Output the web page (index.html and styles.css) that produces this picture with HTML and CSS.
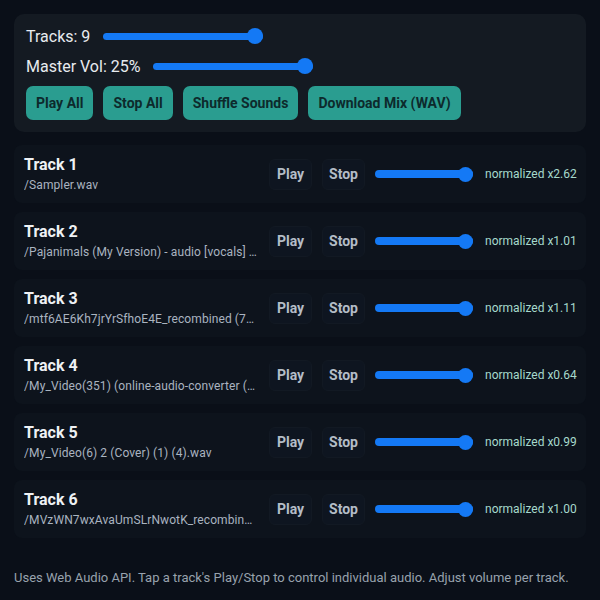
FILE: index.html
```html
<!DOCTYPE html>
<html lang="en">
<head>
  <meta charset="UTF-8">
  <title>Multi Track Player</title>
  <link rel="stylesheet" href="styles.css">
</head>
<body>
  <div class="panel">
    <div class="row">
      <label>Tracks: 9</label>
      <input type="range" class="slider" min="1" max="9" value="9">
    </div>
    <div class="row">
      <label>Master Vol: 25%</label>
      <input type="range" class="slider" min="0" max="25" value="25">
    </div>
    <div class="actions">
      <button class="action">Play All</button>
      <button class="action">Stop All</button>
      <button class="action">Shuffle Sounds</button>
      <button class="action">Download Mix (WAV)</button>
    </div>
  </div>

  <div class="tracks">
    <div class="track">
      <div class="info">
        <div class="title">Track 1</div>
        <div class="file">/Sampler.wav</div>
      </div>
      <button class="ctl">Play</button>
      <button class="ctl">Stop</button>
      <input type="range" class="vol" value="100">
      <span class="norm">normalized x2.62</span>
    </div>
    <div class="track">
      <div class="info">
        <div class="title">Track 2</div>
        <div class="file">/Pajanimals (My Version) - audio [vocals] (1).wav</div>
      </div>
      <button class="ctl">Play</button>
      <button class="ctl">Stop</button>
      <input type="range" class="vol" value="100">
      <span class="norm">normalized x1.01</span>
    </div>
    <div class="track">
      <div class="info">
        <div class="title">Track 3</div>
        <div class="file">/mtf6AE6Kh7jrYrSfhoE4E_recombined (7).wav</div>
      </div>
      <button class="ctl">Play</button>
      <button class="ctl">Stop</button>
      <input type="range" class="vol" value="100">
      <span class="norm">normalized x1.11</span>
    </div>
    <div class="track">
      <div class="info">
        <div class="title">Track 4</div>
        <div class="file">/My_Video(351) (online-audio-converter (1)).wav</div>
      </div>
      <button class="ctl">Play</button>
      <button class="ctl">Stop</button>
      <input type="range" class="vol" value="100">
      <span class="norm">normalized x0.64</span>
    </div>
    <div class="track">
      <div class="info">
        <div class="title">Track 5</div>
        <div class="file">/My_Video(6) 2 (Cover) (1) (4).wav</div>
      </div>
      <button class="ctl">Play</button>
      <button class="ctl">Stop</button>
      <input type="range" class="vol" value="100">
      <span class="norm">normalized x0.99</span>
    </div>
    <div class="track">
      <div class="info">
        <div class="title">Track 6</div>
        <div class="file">/MVzWN7wxAvaUmSLrNwotK_recombined.wav</div>
      </div>
      <button class="ctl">Play</button>
      <button class="ctl">Stop</button>
      <input type="range" class="vol" value="100">
      <span class="norm">normalized x1.00</span>
    </div>
  </div>

  <p class="note">Uses Web Audio API. Tap a track's Play/Stop to control individual audio. Adjust volume per track.</p>
</body>
</html>
```

FILE: styles.css
```css
body {
  margin: 0;
  padding: 14px;
  background: #0a0f18;
  color: #e8ebef;
  font-family: Roboto, "Liberation Sans", sans-serif;
  height: 600px;
  box-sizing: border-box;
  overflow: hidden;
}
.panel {
  background: #141a22;
  border-radius: 10px;
  padding: 12px;
  display: flex;
  flex-direction: column;
  gap: 10px;
}
.row {
  display: flex;
  align-items: center;
  gap: 13px;
  height: 20px;
  font-size: 16px;
}
input[type=range] {
  -webkit-appearance: none;
  appearance: none;
  background: transparent;
  margin: 0;
  padding: 0;
}
.slider {
  width: 160px;
  height: 16px;
}
.slider::-webkit-slider-runnable-track {
  height: 7px;
  border-radius: 4px;
  background: #1479f5;
}
.slider::-webkit-slider-thumb {
  -webkit-appearance: none;
  width: 16px;
  height: 16px;
  border-radius: 50%;
  background: #1479f5;
  margin-top: -4.5px;
}
.actions {
  display: flex;
  gap: 10px;
}
.action {
  height: 34px;
  padding: 0 10px;
  border: none;
  border-radius: 7px;
  background: #2a9d90;
  color: #0d2a2c;
  font-family: inherit;
  font-size: 14px;
  font-weight: bold;
}
.tracks {
  margin-top: 13px;
  display: flex;
  flex-direction: column;
  gap: 9px;
}
.track {
  display: flex;
  align-items: center;
  gap: 10px;
  padding: 10px;
  background: #0d131c;
  border-radius: 8px;
}
.info {
  flex: 1;
  min-width: 0;
  margin-right: 2px;
}
.title {
  font-size: 16px;
  font-weight: bold;
  line-height: 20px;
  color: #eef1f4;
}
.file {
  margin-top: 2px;
  font-size: 12px;
  line-height: 16px;
  letter-spacing: 0.1px;
  color: #aab4c0;
  white-space: nowrap;
  overflow: hidden;
  text-overflow: ellipsis;
}
.ctl {
  width: 43px;
  height: 31px;
  padding: 0;
  border: 1px solid #121923;
  border-radius: 6px;
  background: #0e1520;
  color: #b4bdc7;
  font-family: inherit;
  font-size: 14px;
  font-weight: bold;
}
.vol {
  width: 98px;
  height: 16px;
  margin-left: 2px;
}
.vol::-webkit-slider-runnable-track {
  height: 8px;
  border-radius: 4px;
  background: #1479f5;
}
.vol::-webkit-slider-thumb {
  -webkit-appearance: none;
  width: 15px;
  height: 15px;
  border-radius: 50%;
  background: #1479f5;
  margin-top: -3.5px;
}
.norm {
  width: 91px;
  margin-left: 2px;
  font-size: 12px;
  color: #a6d9cc;
  white-space: nowrap;
}
.note {
  margin: 32px 0 0;
  font-size: 13px;
  color: #98a2ad;
}
```
